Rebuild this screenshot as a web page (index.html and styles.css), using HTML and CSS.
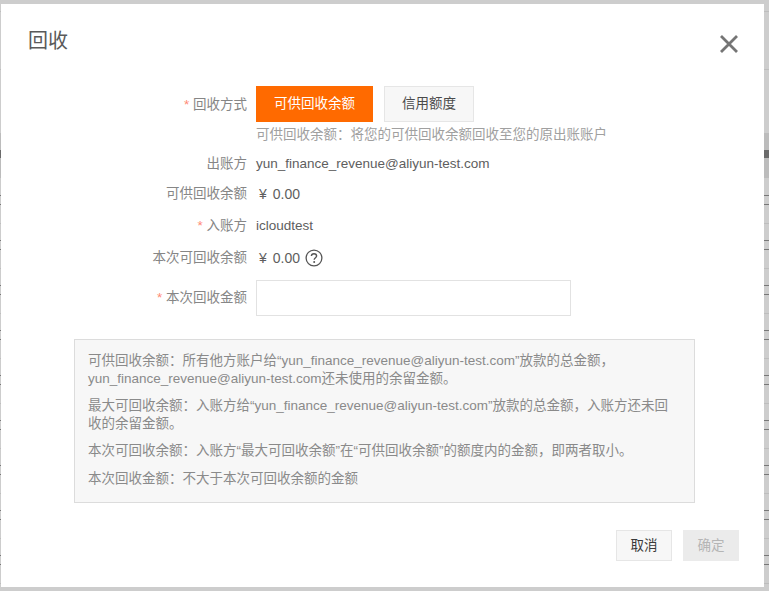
FILE: index.html
```html
<!DOCTYPE html>
<html lang="zh-CN">
<head>
<meta charset="utf-8">
<title>回收</title>
<link rel="stylesheet" href="styles.css">
</head>
<body>
<div class="dialog">
  <header class="dialog-head">
    <h1 class="dialog-title">回收</h1>
    <svg class="close" width="20" height="20" viewBox="0 0 20 20"><path d="M2 2L18 18M18 2L2 18" stroke="#757575" stroke-width="2.8" fill="none"/></svg>
  </header>
  <form class="form">
    <div class="row row-method">
      <div class="label"><span class="req">*</span> 回收方式</div>
      <div class="value">
        <div class="choices">
          <span class="choice choice-on">可供回收余额</span>
          <span class="choice">信用额度</span>
        </div>
        <div class="help">可供回收余额：将您的可供回收余额回收至您的原出账账户</div>
      </div>
    </div>
    <div class="row row-a">
      <div class="label">出账方</div>
      <div class="value">yun_finance_revenue@aliyun-test.com</div>
    </div>
    <div class="row row-b">
      <div class="label">可供回收余额</div>
      <div class="value money"><span>¥</span><span>0.00</span></div>
    </div>
    <div class="row row-c">
      <div class="label"><span class="req">*</span> 入账方</div>
      <div class="value">icloudtest</div>
    </div>
    <div class="row row-d">
      <div class="label">本次可回收余额</div>
      <div class="value money"><span>¥</span><span>0.00</span>
        <svg class="help-icon" width="18" height="18" viewBox="0 0 18 18"><circle cx="9" cy="9" r="7.9" fill="none" stroke="#555" stroke-width="1.3"/><path d="M6.4 7.1C6.4 5.6 7.6 4.7 9 4.7C10.5 4.7 11.6 5.6 11.6 7C11.6 8.6 9.2 8.8 9.2 10.8" fill="none" stroke="#555" stroke-width="1.4"/><circle cx="9.2" cy="13" r="1" fill="#555"/></svg>
      </div>
    </div>
    <div class="row row-e">
      <div class="label"><span class="req">*</span> 本次回收金额</div>
      <div class="value"><input class="input" type="text"></div>
    </div>
  </form>
  <section class="note">
    <p>可供回收余额：所有他方账户给“yun_finance_revenue@aliyun-test.com”放款的总金额，yun_finance_revenue@aliyun-test.com还未使用的余留金额。</p>
    <p>最大可回收余额：入账方给“yun_finance_revenue@aliyun-test.com”放款的总金额，入账方还未回收的余留金额。</p>
    <p>本次可回收余额：入账方“最大可回收余额”在“可供回收余额”的额度内的金额，即两者取小。</p>
    <p>本次回收金额：不大于本次可回收余额的金额</p>
  </section>
  <footer class="foot">
    <span class="btn">取消</span>
    <span class="btn btn-off">确定</span>
  </footer>
</div>
</body>
</html>
```
FILE: styles.css
```css
* { box-sizing: border-box; }
html, body { margin: 0; height: 100%; }
body {
  background-color: #cdcdcd;
  background-image:
    linear-gradient(#cdcdcd 0 11px, #bdbdbd 11px 12px, #cdcdcd 12px 69px, #bdbdbd 69px 70px, #cdcdcd 70px 133px, #bcbcbc 133px 150px, #6a6a6a 150px 158px, #bcbcbc 158px 178px, #cdcdcd 178px),
    linear-gradient(#cdcdcd 0 15px, #777 15px 16px, #cdcdcd 16px 24px, #777 24px 25px, #cdcdcd 25px 43px, #bdbdbd 43px 44px, #cdcdcd 44px);
  background-size: 100% 180px, 100% 45px;
  background-repeat: no-repeat, repeat-y;
  padding: 4px 5px 4px 1px;
  overflow: hidden;
  font: 13.5px/20px "Liberation Sans", "Noto Sans CJK SC", sans-serif;
  color: #555;
}
.dialog {
  width: 763px;
  height: 583px;
  background: #fff;
  display: flex;
  flex-direction: column;
}
.dialog-head {
  display: flex;
  justify-content: space-between;
  align-items: flex-start;
  height: 82px;
  padding: 23px 25px 0 27px;
}
.dialog-title {
  margin: 0;
  font-size: 20px;
  line-height: 28px;
  font-weight: 400;
  color: #5a5a5a;
}
.close { margin-top: 7px; }
.row { display: flex; align-items: center; }
.label {
  width: 246px;
  text-align: right;
  color: #868686;
  flex: none;
}
.req { color: #ff8a75; }
.value { margin-left: 9px; color: #5e5e5e; }
.money { display: flex; align-items: center; gap: 6px; padding-left: 3px; font-size: 14px; }
.help-icon { margin-left: -1px; }
.row-method { align-items: flex-start; }
.row-method .label { padding-top: 9px; }
.choices { display: flex; gap: 11px; }
.choice {
  height: 36px;
  width: 90px;
  border: 1px solid #e6e6e6;
  background: #f7f7f7;
  color: #4a4a4a;
  display: flex;
  align-items: center;
  justify-content: center;
}
.choice-on {
  width: 117px;
  background: #ff6a00;
  border-color: #ff6a00;
  color: #fff;
}
.help { color: #a0a0a0; margin-top: 3px; }
.row-a { margin-top: 9px; }
.row-b { margin-top: 10px; }
.row-c { margin-top: 12px; }
.row-d { margin-top: 12px; }
.row-e { margin-top: 12px; }
.input {
  display: block;
  width: 315px;
  height: 36px;
  border: 1px solid #e2e2e2;
  background: #fff;
  margin: 0;
}
.note {
  margin: 23px 0 0 73px;
  width: 621px;
  height: 164px;
  background: #f7f7f7;
  border: 1px solid #dcdcdc;
  padding: 12px 13px;
  color: #8a8a8a;
  line-height: 17.5px;
}
.note p { margin: 0 0 10px; }
.foot {
  display: flex;
  justify-content: flex-end;
  gap: 11px;
  margin-top: 27px;
  padding-right: 25px;
}
.btn {
  width: 56px;
  height: 31px;
  border: 1px solid #e6e6e6;
  background: #f7f7f7;
  color: #3a3a3a;
  display: flex;
  align-items: center;
  justify-content: center;
}
.btn-off {
  background: #ebebeb;
  border-color: #ebebeb;
  color: #b5b5b5;
}
```
